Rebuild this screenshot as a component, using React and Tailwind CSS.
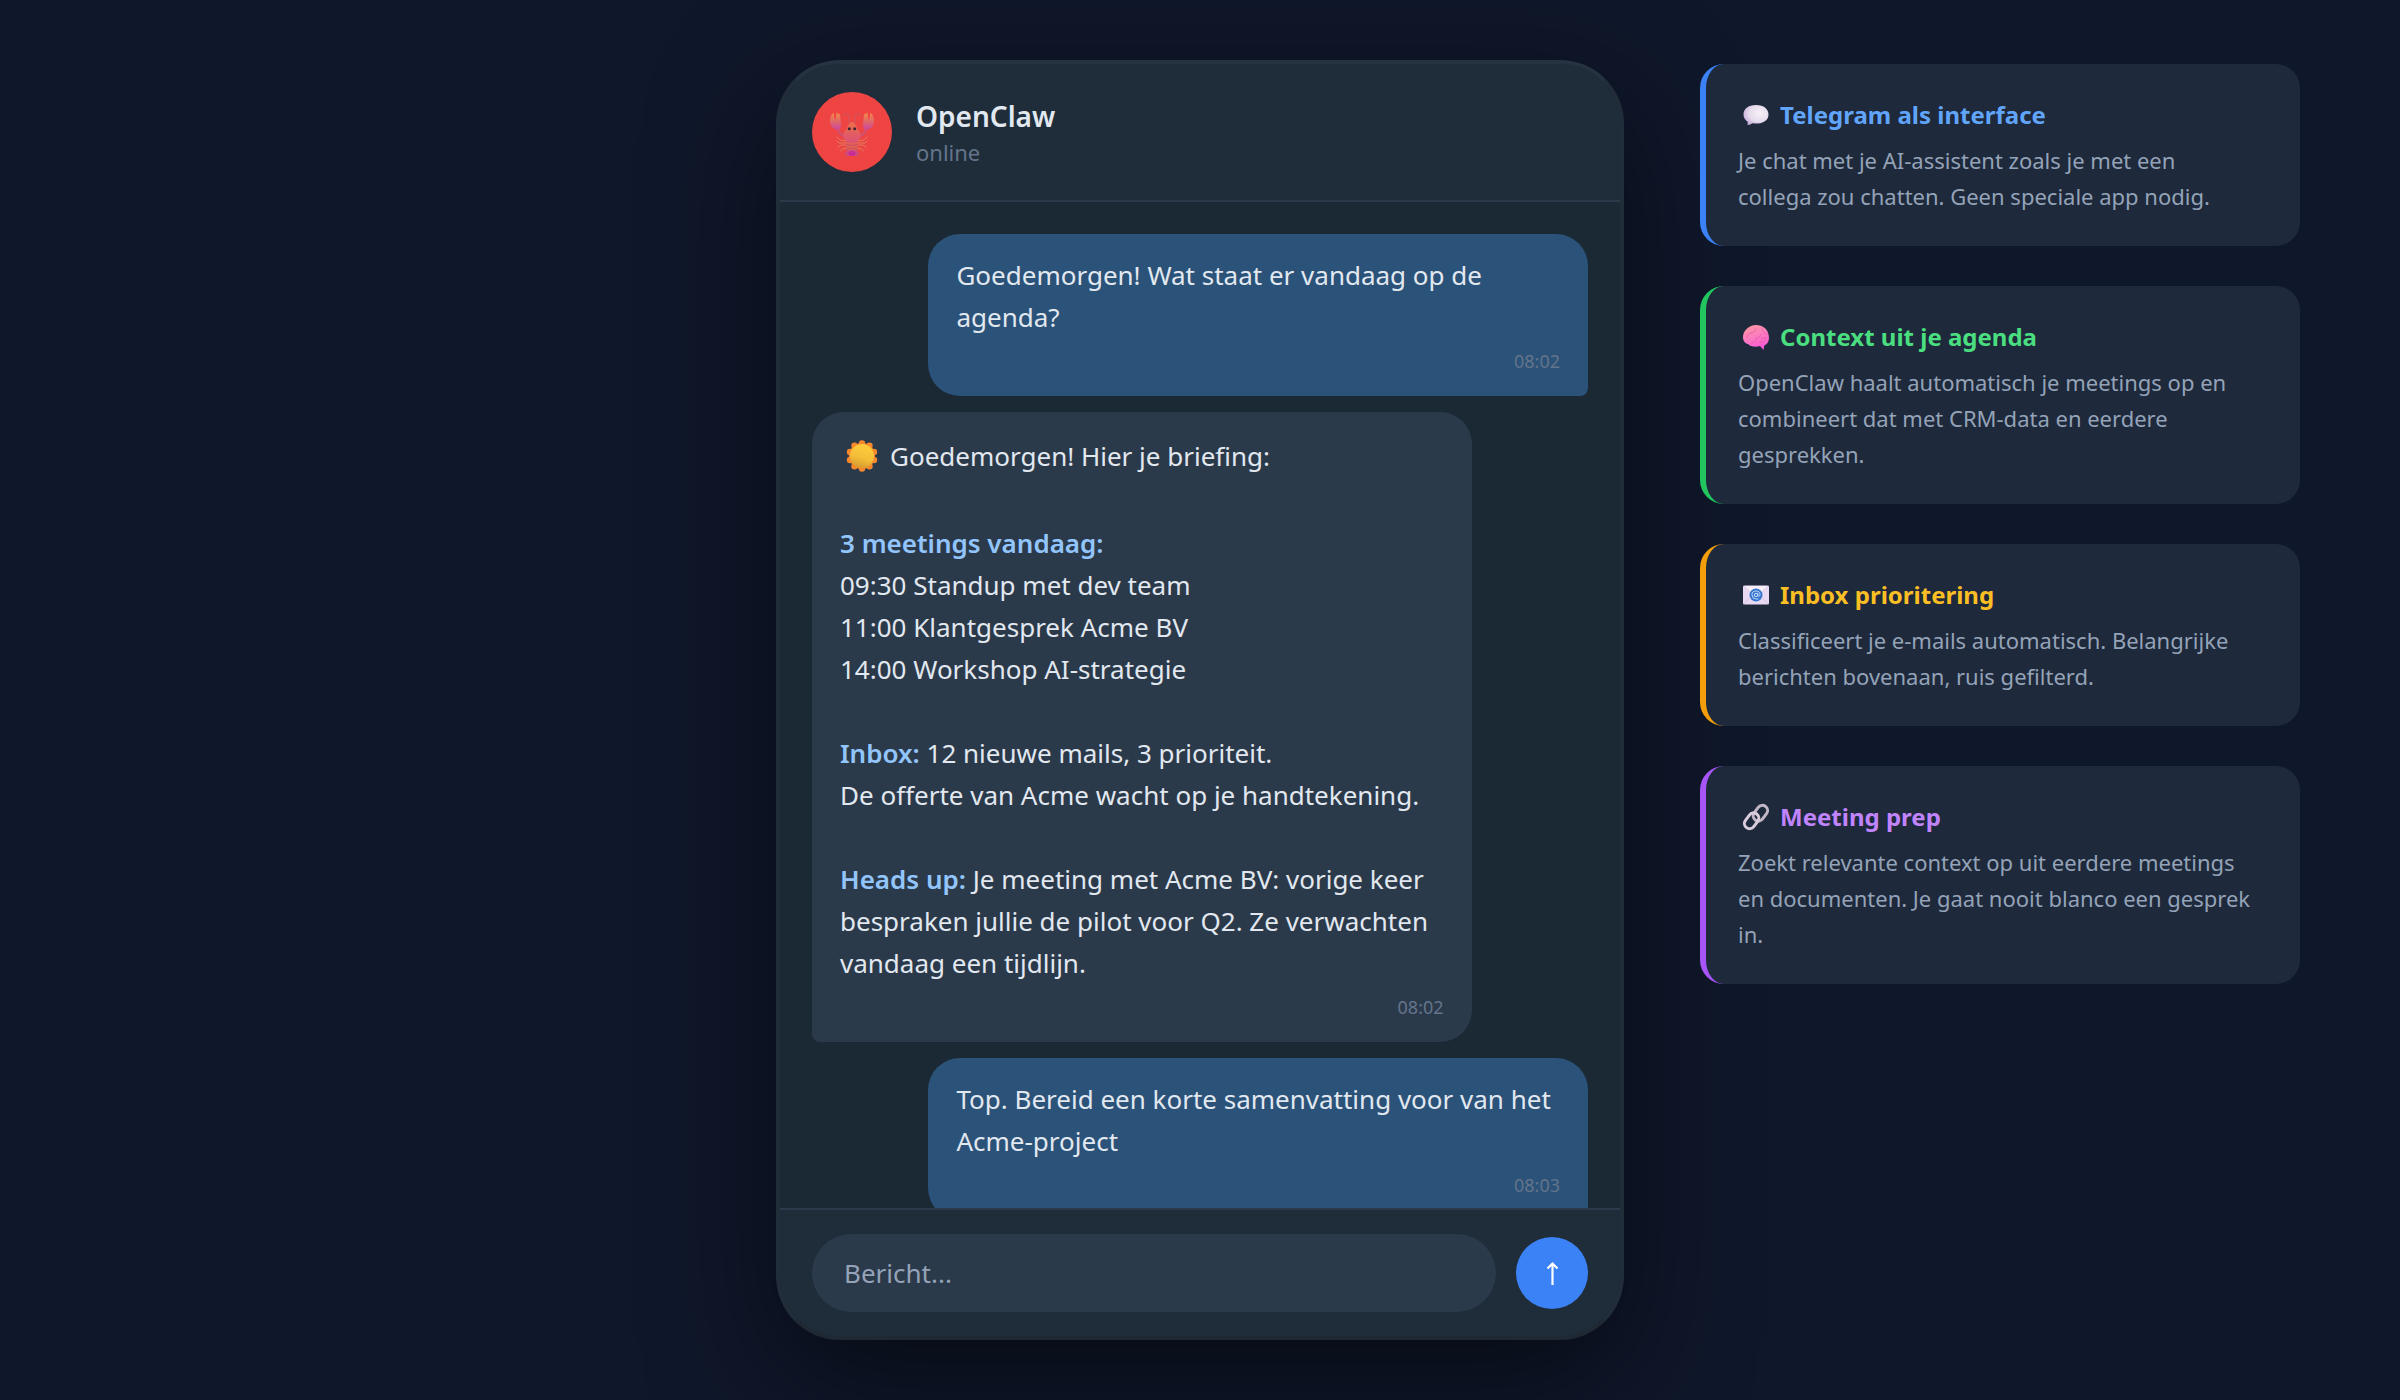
import { useState } from "react";

const briefing = [
  "09:30 Standup met dev team",
  "11:00 Klantgesprek Acme BV",
  "14:00 Workshop AI-strategie",
];

const LobsterIcon = () => (
  <svg viewBox="-1 -3 48 48" className="h-12 w-12" aria-hidden="true">
    <defs>
      <linearGradient id="claw" x1="0" y1="0" x2="0" y2="1">
        <stop offset="0" stopColor="#f58a45" />
        <stop offset="0.5" stopColor="#e06a68" />
        <stop offset="1" stopColor="#cc48a0" />
      </linearGradient>
      <linearGradient id="shell" x1="0" y1="0" x2="0" y2="1">
        <stop offset="0" stopColor="#ea7048" />
        <stop offset="1" stopColor="#dc5078" />
      </linearGradient>
    </defs>
    <g fill="none" stroke="#e07a5c" strokeWidth="1" strokeLinecap="round">
      <path d="M20 13V6q-1-4-3.500-3.500-2.500 0-2.500 3" stroke="#cf5560" />
      <path d="M26 13V6q1-4 3.500-3.500 2.500 0 2.500 3" stroke="#cf5560" />
      <path d="M17 30l-6-1-3-3M17 32l-7 0-2-2M17 34l-5 0-3 2M18 37l-5 1-1 2" />
      <path d="M29 30l6-1 3-3M29 32l7 0 2-2M29 34l5 0 3 2M28 37l5 1 1 2" />
    </g>
    <path
      d="M9 18q1 6 8 7M37 18q-1 6-8 7"
      fill="none"
      stroke="#d3506c"
      strokeWidth="2.800"
    />
    <path
      d="M5 1.500Q1 4 1 10.500q1 7.500 7 8 4.500 0 4-5.500l-1-9.500-3.500-2L6.500 9Q4.500 7 5 1.500z"
      fill="url(#claw)"
    />
    <path
      d="M41 1.500q4 2.500 4 9-1 7.500-7 8-4.500 0-4-5.500l1-9.500 3.500-2 1 7.500q2-2 1.500-7.500z"
      fill="url(#claw)"
    />
    <path d="M17 28h12v8l-1.500 4h-9L17 36z" fill="#df6254" />
    <path
      d="M17 33.500q6 2 12 0M17.500 37q5.500 2 11 0"
      fill="none"
      stroke="#c94a62"
      strokeWidth="0.900"
    />
    <path d="M18.500 39h9l3 3-2 3h-11l-2-3z" fill="#d04c7c" />
    <ellipse cx="23" cy="42.500" rx="3.600" ry="2.400" fill="#c92b98" />
    <path
      d="M23 11q-3 .5-5 6.500-4 4-3.700 8Q16 32 23 32t8.700-6.500q.3-4-3.700-8Q26 11.500 23 11z"
      fill="url(#shell)"
    />
    <circle cx="20.300" cy="17.800" r="1.500" fill="#3a2530" />
    <circle cx="25.700" cy="17.800" r="1.500" fill="#3a2530" />
  </svg>
);

const SunIcon = () => (
  <svg viewBox="0 0 32 32" className="h-8 w-8" aria-hidden="true">
    <defs>
      <linearGradient id="sun" x1="0.7" y1="0" x2="0.4" y2="1">
        <stop offset="0" stopColor="#ffcf3b" />
        <stop offset="0.600" stopColor="#f4bd38" />
        <stop offset="1" stopColor="#d49a30" />
      </linearGradient>
    </defs>
    <g fill="#f8892c">
      <circle cx="16" cy="3.500" r="3.200" />
      <circle cx="23.500" cy="5.800" r="3.200" />
      <circle cx="28" cy="12" r="3.200" />
      <circle cx="28" cy="20" r="3.200" />
      <circle cx="23.500" cy="26.200" r="3.200" />
      <circle cx="16" cy="28.500" r="3.200" />
      <circle cx="8.500" cy="26.200" r="3.200" />
      <circle cx="4" cy="20" r="3.200" />
      <circle cx="4" cy="12" r="3.200" />
      <circle cx="8.500" cy="5.800" r="3.200" />
      <circle cx="16" cy="16" r="13" />
    </g>
    <circle cx="16" cy="16" r="12" fill="url(#sun)" />
  </svg>
);

const BubbleIcon = () => (
  <svg viewBox="0 0 28 28" className="h-7 w-7" aria-hidden="true">
    <defs>
      <radialGradient id="speech" cx="0.65" cy="0.4" r="0.7">
        <stop offset="0" stopColor="#f6f0f8" />
        <stop offset="0.600" stopColor="#e6dcec" />
        <stop offset="1" stopColor="#c8aedb" />
      </radialGradient>
    </defs>
    <path
      d="M14 4C6 4 1.500 8 1.500 13.500c0 3.500 1.800 5.600 4.200 7.200L5.600 24q3.200-.3 4.600-1.800l3.800.4c8 0 12.500-3.800 12.500-9.100S22 4 14 4z"
      fill="url(#speech)"
    />
  </svg>
);

const BrainIcon = () => (
  <svg viewBox="0 0 28 28" className="h-7 w-7" aria-hidden="true">
    <defs>
      <linearGradient id="brain" x1="0" y1="0" x2="0.4" y2="1">
        <stop offset="0" stopColor="#fb9a9c" />
        <stop offset="0.500" stopColor="#fb80bd" />
        <stop offset="1" stopColor="#fb5ad6" />
      </linearGradient>
    </defs>
    <path
      d="M14 2C7 2 1 8 1 14c0 4 2 6.500 5 7 2 2.500 8 3.500 12 2l3.500 4 .8-4.500C26 21 27.500 17 26.800 13 26 6 21 2 14 2z"
      fill="url(#brain)"
    />
    <path
      d="M5 15q0-5 5-5 4-1 4-4M9 20q5 0 5-5 4 0 5-4M17 19q5 1 7-4M20 6q0 4 5 5M19 15q2 1 5 0"
      fill="none"
      stroke="#e8609f"
      strokeWidth="0.900"
      strokeLinecap="round"
    />
  </svg>
);

const MailIcon = () => (
  <svg viewBox="0 0 28 28" className="h-7 w-7" aria-hidden="true">
    <rect x="1" y="4.500" width="26" height="19" rx="1.500" fill="#e9daf3" />
    <path d="M1.500 5h25L14 16z" fill="#f6eff9" />
    <path
      d="M1.500 5L14 16 26.500 5M1.500 23L11 14M26.500 23L17 14"
      fill="none"
      stroke="#d2bce0"
      strokeWidth="0.700"
    />
    <circle cx="14" cy="14" r="6.500" fill="#3576d0" />
    <circle cx="14" cy="14" r="1.700" fill="none" stroke="#cfe0fa" />
    <path
      d="M15.800 12v2.500q1 1.500 2.200 0Q18.300 10 14 10t-4 4 4 4h2.500"
      fill="none"
      stroke="#cfe0fa"
      strokeWidth="0.900"
    />
  </svg>
);

const LinkIcon = () => (
  <svg viewBox="0 0 28 28" className="h-7 w-7" aria-hidden="true">
    <g fill="none" strokeWidth="3">
      <rect
        x="-8.500"
        y="-5.200"
        width="17"
        height="10.400"
        rx="5.200"
        transform="translate(18.400 10.200) rotate(-53)"
        stroke="#c3b6c6"
      />
      <rect
        x="-8.500"
        y="-5.200"
        width="17"
        height="10.400"
        rx="5.200"
        transform="translate(9.600 17.800) rotate(-53)"
        stroke="#d9cddb"
      />
    </g>
  </svg>
);

const features = [
  {
    title: "Telegram als interface",
    text: "Je chat met je AI-assistent zoals je met een\ncollega zou chatten. Geen speciale app nodig.",
    icon: BubbleIcon,
    border: "border-[#3b82f6]",
    color: "text-[#60a5fa]",
  },
  {
    title: "Context uit je agenda",
    text: "OpenClaw haalt automatisch je meetings op en combineert dat met CRM-data en eerdere gesprekken.",
    icon: BrainIcon,
    border: "border-[#22c55e]",
    color: "text-[#4ade80]",
  },
  {
    title: "Inbox prioritering",
    text: "Classificeert je e-mails automatisch. Belangrijke berichten bovenaan, ruis gefilterd.",
    icon: MailIcon,
    border: "border-[#f59e0b]",
    color: "text-[#fbbf24]",
  },
  {
    title: "Meeting prep",
    text: "Zoekt relevante context op uit eerdere meetings\nen documenten. Je gaat nooit blanco een gesprek\nin.",
    icon: LinkIcon,
    border: "border-[#a855f7]",
    color: "text-[#c084fc]",
  },
];

const Message = ({ own = false, time, children }) => (
  <div
    className={`w-[85%] shrink-0 rounded-[32px] px-7 py-5 text-[26px] leading-[42px] ${
      own
        ? "self-end rounded-br-lg bg-[#2b5278]"
        : "self-start rounded-bl-lg bg-[#2b3a4a]"
    }`}
  >
    {children}
    <div className="mt-2 text-right text-[18px] leading-[30px] text-[#64748b]">
      {time}
    </div>
  </div>
);

const FeatureCard = ({ title, text, icon: Icon, border, color }) => (
  <article
    className={`rounded-3xl border-l-[6px] bg-[#1e293b] p-8 ${border}`}
  >
    <h2
      className={`mb-2 flex items-center gap-2.5 pl-1 text-2xl leading-[38px] font-bold ${color}`}
    >
      <Icon />
      {title}
    </h2>
    <p className="text-[22px] leading-9 whitespace-pre-line text-[#94a3b8]">
      {text}
    </p>
  </article>
);

const App = () => {
  const [draft, setDraft] = useState("");

  return (
    <div className="grid h-screen min-h-[900px] grid-cols-[1fr_minmax(0,848px)_1fr] bg-[#0f172a] font-['Noto_Sans',sans-serif] text-[#e2e8f0]">
      <main className="col-start-2 flex min-h-0 flex-col py-15">
        <section className="flex min-h-0 flex-1 flex-col overflow-hidden rounded-[64px] border-4 border-[#212e3a] border-t-[#253341] border-b-[#1f2934] bg-[#1b2935] shadow-[0_40px_120px_rgba(0,0,0,0.5)]">
          <header className="flex items-center gap-6 border-b-2 border-[#2b394a] bg-[#1f2d3a] px-8 py-7">
            <div className="flex h-20 w-20 items-center justify-center rounded-full bg-[#ef4444]">
              <LobsterIcon />
            </div>
            <div className="pt-1">
              <h1 className="text-[28px] leading-9 font-semibold">OpenClaw</h1>
              <p className="text-[22px] leading-9 text-[#64748b]">online</p>
            </div>
          </header>

          <div className="flex min-h-0 flex-1 flex-col gap-4 overflow-hidden p-8">
            <Message own time="08:02">
              Goedemorgen! Wat staat er vandaag op de agenda?
            </Message>
            <Message time="08:02">
              <p className="flex h-12 items-center gap-3 pl-1.5">
                <SunIcon />
                Goedemorgen! Hier je briefing:
              </p>
              <div className="mt-[42px]">
                <strong className="font-semibold text-[#93c5fd]">
                  3 meetings vandaag:
                </strong>
                {briefing.map((item) => (
                  <p key={item}>{item}</p>
                ))}
              </div>
              <p className="mt-[42px]">
                <strong className="font-semibold text-[#93c5fd]">Inbox:</strong>{" "}
                12 nieuwe mails, 3 prioriteit.
                <br />
                De offerte van Acme wacht op je handtekening.
              </p>
              <p className="mt-[42px]">
                <strong className="font-semibold text-[#93c5fd]">
                  Heads up:
                </strong>{" "}
                Je meeting met Acme BV: vorige keer bespraken jullie de pilot
                voor Q2. Ze verwachten vandaag een tijdlijn.
              </p>
            </Message>
            <Message own time="08:03">
              Top. Bereid een korte samenvatting voor van het Acme-project
            </Message>
          </div>

          <form
            className="flex items-center gap-5 border-t-2 border-[#2b394a] bg-[#1f2d3a] px-8 py-6"
            onSubmit={(e) => e.preventDefault()}
          >
            <input
              type="text"
              aria-label="Bericht"
              placeholder="Bericht..."
              value={draft}
              onChange={(e) => setDraft(e.target.value)}
              className="min-w-0 flex-1 rounded-full bg-[#2b3a4a] px-8 py-[18px] text-[26px] leading-[42px] outline-none placeholder:text-[#94a3b8]"
            />
            <button
              type="submit"
              aria-label="Verstuur"
              className="flex h-18 w-18 items-center justify-center rounded-full bg-[#3b82f6] text-white"
            >
              <svg viewBox="0 0 24 24" className="h-6 w-6" aria-hidden="true">
                <path
                  d="M12.500 24V3M7.500 7.500l5-5 5 5"
                  fill="none"
                  stroke="currentColor"
                  strokeWidth="2.200"
                />
              </svg>
            </button>
          </form>
        </section>
      </main>

      <aside className="flex flex-col gap-10 pt-16 pr-[100px] pl-[76px]">
        {features.map((feature) => (
          <FeatureCard key={feature.title} {...feature} />
        ))}
      </aside>
    </div>
  );
};

export default App;
